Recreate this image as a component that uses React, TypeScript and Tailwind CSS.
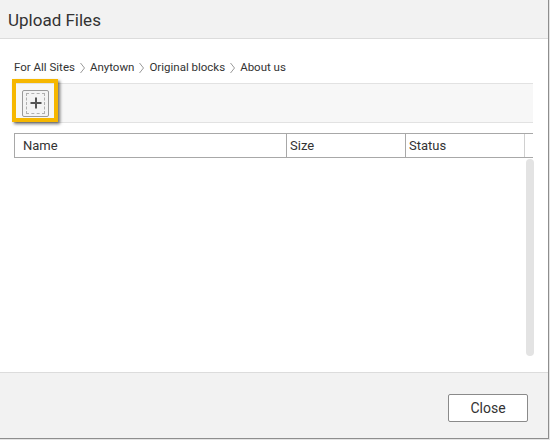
import React from "react";

function Chevron() {
  return (
    <svg width="7" height="12" viewBox="0 0 7 12" className="mx-[4px] shrink-0">
      <path d="M1.5 1 L5.5 6 L1.5 11" fill="none" stroke="#9a9a9a" strokeWidth="1" />
    </svg>
  );
}

export default function App() {
  const crumbs = ["For All Sites", "Anytown", "Original blocks", "About us"];
  return (
    <div className="w-[550px] h-[440px] bg-[#e4e4e4] relative" style={{ fontFamily: "Roboto, 'Liberation Sans', sans-serif" }}>
      <div className="w-[549px] h-[439px] border-r border-b border-[#8e8e8e] bg-white flex flex-col relative">
        {/* Header */}
        <div className="h-[39px] shrink-0 bg-[#f2f2f2] border-b border-[#dcdcdc] flex items-center pl-[8px] pt-[2px]">
          <span className="text-[17px] text-[#333] leading-none">Upload Files</span>
        </div>

        {/* Content */}
        <div className="flex-1 flex flex-col px-[14px] relative">
          <div className="mt-[21px] h-[16px] flex items-center text-[11.5px] text-[#333]">
            {crumbs.map((c, i) => (
              <React.Fragment key={c}>
                {i > 0 && <Chevron />}
                <span>{c}</span>
              </React.Fragment>
            ))}
          </div>

          {/* Toolbar */}
          <div className="mt-[7px] w-[519px] h-[40px] bg-[#f7f7f7] border-t border-b border-[#e2e2e2] flex items-center pl-[8px]">
            <div className="w-[27px] h-[27px] border border-[#9a9a9a] rounded-[2px] bg-[#f4f4f4] flex items-center justify-center">
              <div className="w-[19px] h-[21px] border border-dashed border-[#b0b0b0] flex items-center justify-center">
                <svg width="12" height="12" viewBox="0 0 12 12">
                  <path d="M6 0.5 V11.5 M0.5 6 H11.5" stroke="#555" strokeWidth="2" />
                </svg>
              </div>
            </div>
          </div>

          {/* Highlight */}
          <div className="absolute left-[12px] top-[40px] w-[46px] h-[43px] border-[4px] border-[#f6b700] shadow-[2px_2px_3px_rgba(0,0,0,0.55)] pointer-events-none" />

          {/* Table header */}
          <div className="mt-[10px] w-[519px] h-[25px] border-t border-b border-[#a8a8a8] flex text-[13px] text-[#333]">
            <div className="w-[272px] border-l border-[#a8a8a8] pl-[8px] flex items-center">Name</div>
            <div className="w-[119px] border-l border-[#a8a8a8] pl-[3px] flex items-center">Size</div>
            <div className="w-[119px] border-l border-[#a8a8a8] pl-[3px] flex items-center">Status</div>
            <div className="flex-1 border-l border-[#d0d0d0]" />
          </div>

          {/* Body */}
          <div className="flex-1 flex justify-end">
            <div className="w-[8px] h-[197px] mt-[1px] bg-[#e3e3e3] rounded-[4px]" />
          </div>
        </div>

        {/* Footer */}
        <div className="h-[66px] shrink-0 bg-[#f2f2f2] border-t border-[#dcdcdc] flex justify-end pt-[21px] pr-[20px]">
          <button className="w-[80px] h-[28px] bg-white border border-[#8a8a8a] rounded-[2px] text-[14px] text-[#333]">
            Close
          </button>
        </div>
      </div>
    </div>
  );
}
